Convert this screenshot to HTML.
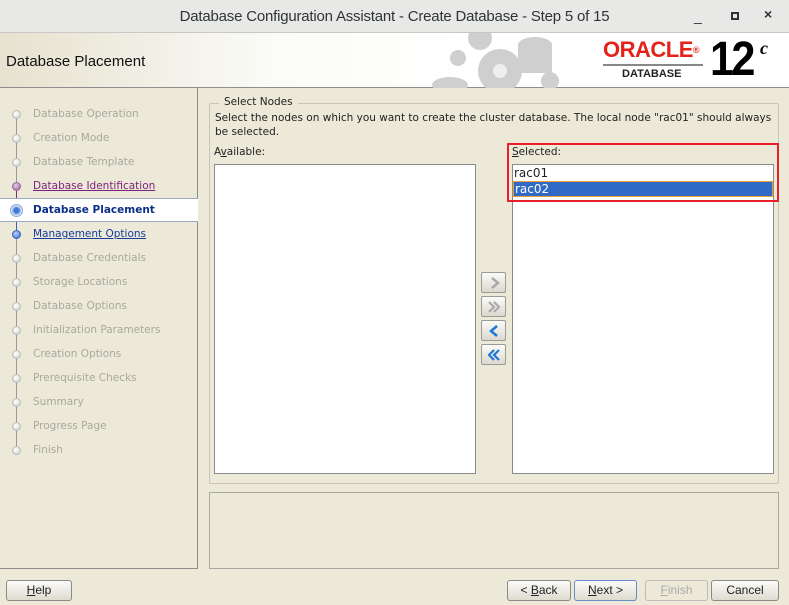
<!DOCTYPE html>
<html><head><style>
*{margin:0;padding:0;box-sizing:border-box}
body{width:789px;height:605px;background:#ECE9D8;font-family:"DejaVu Sans",sans-serif;font-size:10.5px;position:relative;overflow:hidden;color:#222}
.a{position:absolute}
#title{left:0;top:0;width:789px;height:33px;background:#e8e8e7;border-bottom:1px solid #c8c8c6;font-family:"Liberation Sans",sans-serif;font-size:15px;letter-spacing:-0.2px;color:#2e3436;text-align:center;line-height:33px}
#hdr{left:0;top:33px;width:789px;height:55px;background:linear-gradient(90deg,#e6e2cf 0%,#fbfbf8 35%,#fff 60%,#fff 100%);border-bottom:1px solid #8e8e8e}
.step{position:absolute;left:33px;color:#a8a8a0;font-size:10.5px}
.dot{position:absolute;left:12px;width:9px;height:9px;border-radius:50%;background:radial-gradient(circle at 40% 35%,#fff,#ccc);border:1px solid #bbb}
.list{background:#fff;border:1px solid #8a8a8a}
.btn{position:absolute;height:21px;border:1px solid #8a8a88;border-radius:3px;background:linear-gradient(#fbfbf8,#dedbd0);font-family:"Liberation Sans",sans-serif;font-size:12px;text-align:center;line-height:19px}
.ab{position:absolute;left:481px;width:25px;height:21px;border:1px solid #9a9a98;border-radius:2px;background:linear-gradient(#fafaf7,#dcd9cf)}
.ab svg{position:absolute;left:6px;top:4px}
</style></head><body>
<div id="title" class="a">Database Configuration Assistant - Create Database - Step 5 of 15</div>
<div class="a" style="left:694px;top:8px;font-size:14px;color:#2e3436;font-family:'Liberation Sans'">_</div>
<div class="a" style="left:731px;top:12px;width:8px;height:8px;border:2px solid #2e3436"></div>
<div class="a" style="left:764px;top:6px;font-size:14px;color:#2e3436;font-family:'Liberation Sans';font-weight:bold">×</div>
<div id="hdr" class="a"></div>
<div class="a" style="left:6px;top:53px;font-family:'Liberation Sans';font-size:15px;color:#111">Database Placement</div>
<svg class="a" style="left:430px;top:33px" width="170" height="55"><g fill="#cfcfcf"><circle cx="70" cy="38" r="22"/><circle cx="50" cy="5" r="12"/><circle cx="28" cy="25" r="8"/><ellipse cx="105" cy="12" rx="17" ry="8"/><rect x="88" y="10" width="34" height="30"/><ellipse cx="20" cy="52" rx="18" ry="8"/><circle cx="120" cy="48" r="9"/></g><circle cx="70" cy="38" r="7" fill="#eee"/></svg>
<div class="a" style="left:603px;top:39px;font-family:'Liberation Sans';font-weight:bold;font-size:22px;color:#e3231b;letter-spacing:-0.5px;line-height:22px">ORACLE<span style="font-size:9px;vertical-align:top">®</span></div>
<div class="a" style="left:603px;top:64px;width:100px;height:2px;background:#888"></div>
<div class="a" style="left:622px;top:68px;font-family:'Liberation Sans';font-weight:bold;font-size:11px;color:#222">DATABASE</div>
<div class="a" style="left:710px;top:35px;font-family:'Liberation Sans';font-weight:bold;font-size:48px;line-height:50px;color:#000;letter-spacing:-3px;transform:scaleX(0.9);transform-origin:left">12</div>
<div class="a" style="left:760px;top:38px;font-family:'Liberation Serif';font-style:italic;font-weight:bold;font-size:18px;color:#000">c</div>
<!-- sidebar -->
<div class="a" style="left:197px;top:88px;width:1px;height:481px;background:#8e8e8e"></div>
<div class="a" style="left:0;top:568px;width:198px;height:1px;background:#8e8e8e"></div>
<div class="a" style="left:16px;top:114px;width:1px;height:336px;background:#999"></div>
<div class="a" style="left:16px;top:186px;width:1px;height:24px;background:#7a2f7a"></div>
<div class="a" style="left:16px;top:210px;width:1px;height:24px;background:#3a5fb8"></div>
<div class="a" style="left:0;top:198px;width:198px;height:24px;background:#fff;border-top:1px solid #9aaac8;border-bottom:1px solid #9aaac8"></div>
<div class="dot" style="top:110px"></div><div class="step" style="top:108px">Database Operation</div>
<div class="dot" style="top:134px"></div><div class="step" style="top:132px">Creation Mode</div>
<div class="dot" style="top:158px"></div><div class="step" style="top:156px">Database Template</div>
<div class="dot" style="top:182px;background:radial-gradient(circle at 40% 35%,#e8d0e8,#9a5a9a);border-color:#9a6a9a"></div><div class="step" style="top:180px;color:#7a1f7a;text-decoration:underline">Database Identification</div>
<div class="dot" style="top:204px;left:10px;width:13px;height:13px;background:radial-gradient(circle,#3d7ad8 30%,#cde 60%,#fff);border-color:#8aa8d8"></div><div class="step" style="top:204px;color:#0b2f86;font-weight:bold">Database Placement</div>
<div class="dot" style="top:230px;background:radial-gradient(circle at 40% 35%,#bcd4ff,#2f64d0);border-color:#3a60b8"></div><div class="step" style="top:228px;color:#173c9a;text-decoration:underline">Management Options</div>
<div class="dot" style="top:254px"></div><div class="step" style="top:252px">Database Credentials</div>
<div class="dot" style="top:278px"></div><div class="step" style="top:276px">Storage Locations</div>
<div class="dot" style="top:302px"></div><div class="step" style="top:300px">Database Options</div>
<div class="dot" style="top:326px"></div><div class="step" style="top:324px">Initialization Parameters</div>
<div class="dot" style="top:350px"></div><div class="step" style="top:348px">Creation Options</div>
<div class="dot" style="top:374px"></div><div class="step" style="top:372px">Prerequisite Checks</div>
<div class="dot" style="top:398px"></div><div class="step" style="top:396px">Summary</div>
<div class="dot" style="top:422px"></div><div class="step" style="top:420px">Progress Page</div>
<div class="dot" style="top:446px"></div><div class="step" style="top:444px">Finish</div>
<!-- group -->
<div class="a" style="left:209px;top:103px;width:570px;height:381px;border:1px solid #c8c6b8;border-radius:2px"></div>
<div class="a" style="left:219px;top:96px;padding:0 5px;background:#ECE9D8">Select Nodes</div>
<div class="a" style="left:215px;top:111px;width:562px;line-height:14px">Select the nodes on which you want to create the cluster database. The local node "rac01" should always be selected.</div>
<div class="a" style="left:214px;top:146px">A<u>v</u>ailable:</div>
<div class="a list" style="left:214px;top:164px;width:262px;height:310px"></div>
<div class="a" style="left:512px;top:146px"><u>S</u>elected:</div>
<div class="a list" style="left:512px;top:164px;width:262px;height:310px"></div>
<div class="a" style="left:514px;top:166px;font-size:12px">rac01</div>
<div class="a" style="left:513px;top:181px;width:260px;height:16px;background:#3169c6;border:1px solid #e8a030;color:#fff;font-size:12px;line-height:14px;padding-left:1px">rac02</div>
<div class="a" style="left:507px;top:143px;width:272px;height:59px;border:2px solid #e8202a"></div>
<div class="ab" style="top:272px"><svg width="13" height="12"><path d="M4 1 L10 6 L4 11" fill="none" stroke="#aaa" stroke-width="2.5"/></svg></div>
<div class="ab" style="top:296px"><svg width="13" height="12"><path d="M1 1 L6 6 L1 11 M6 1 L11 6 L6 11" fill="none" stroke="#aaa" stroke-width="2.2"/></svg></div>
<div class="ab" style="top:320px"><svg width="13" height="12"><path d="M9 1 L3 6 L9 11" fill="none" stroke="#1e78d8" stroke-width="2.5"/></svg></div>
<div class="ab" style="top:344px"><svg width="13" height="12"><path d="M6 1 L1 6 L6 11 M11 1 L6 6 L11 11" fill="none" stroke="#1e78d8" stroke-width="2.2"/></svg></div>
<div class="a" style="left:209px;top:492px;width:570px;height:77px;border:1px solid #a8a8a4"></div>
<div class="btn" style="left:6px;top:580px;width:66px"><u>H</u>elp</div>
<div class="btn" style="left:507px;top:580px;width:64px">&lt; <u>B</u>ack</div>
<div class="btn" style="left:574px;top:580px;width:63px;border-color:#6a8acc"><u>N</u>ext &gt;</div>
<div class="btn" style="left:645px;top:580px;width:63px;color:#aaa;background:#ECE9D8;border-color:#bbb"><u>F</u>inish</div>
<div class="btn" style="left:711px;top:580px;width:68px">Cancel</div>
</body></html>
